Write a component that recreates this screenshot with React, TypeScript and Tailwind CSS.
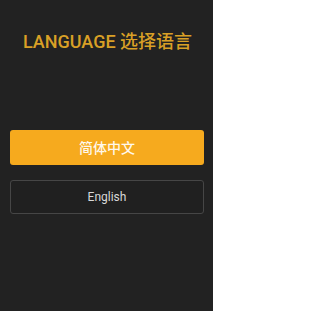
import React from "react";

export default function App() {
  return (
    <div className="w-[213px] h-[311px] bg-[#222222] pt-[30px] pl-[10px] pr-[9px] flex flex-col font-['Roboto','Noto_Sans_CJK_SC',sans-serif]">
      <div className="h-[20px] leading-[20px] text-[18px] font-medium text-[#d9a026] text-center whitespace-nowrap pl-[1px]">
        <span className="font-['Roboto',sans-serif]">LANGUAGE</span>{" "}
        <span className="font-['Noto_Sans_CJK_SC',sans-serif]">选择语言</span>
      </div>
      <button className="mt-[80px] h-[35px] w-full rounded-[3px] bg-[#f6aa1e] text-[14px] font-medium text-[#fff8ec] flex items-center justify-center font-['Noto_Sans_CJK_SC',sans-serif]">
        简体中文
      </button>
      <button className="mt-[15px] h-[34px] w-full rounded-[3px] border-[1.5px] border-[#464646] bg-[#202020] text-[12px] text-[#d8d8d8] flex items-center justify-center">
        English
      </button>
    </div>
  );
}
